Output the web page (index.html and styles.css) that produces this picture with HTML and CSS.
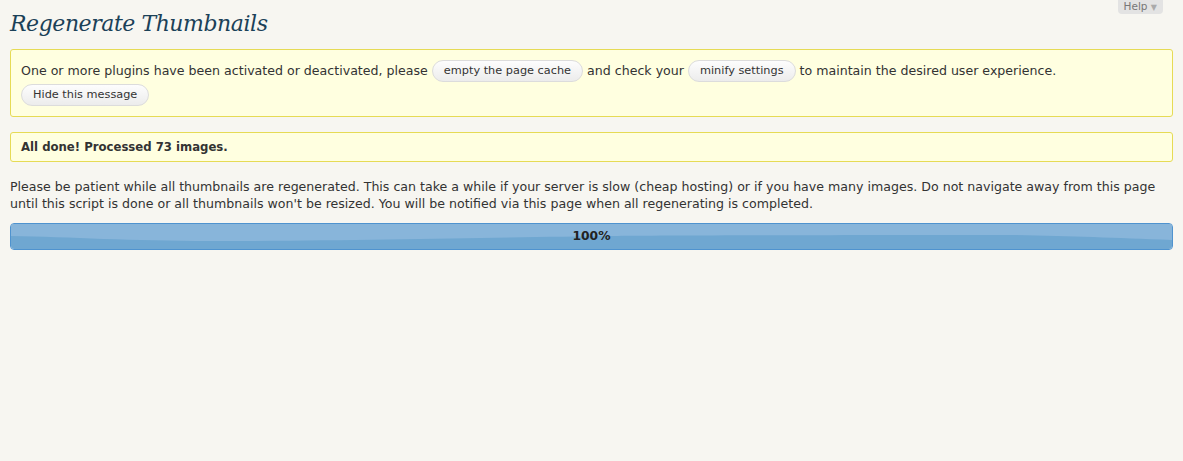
FILE: index.html
```html
<!DOCTYPE html>
<html lang="en">
<head>
<meta charset="utf-8">
<title>Regenerate Thumbnails</title>
<link rel="stylesheet" href="styles.css">
</head>
<body>

<!-- ======= HELP TAB ======= -->
<div class="help-bar">
  <a class="help-tab" href="#">Help <span class="arrow">▼</span></a>
</div>

<div class="wrap">
  <h2 class="page-title">Regenerate Thumbnails</h2>

  <!-- -------- PLUGIN NOTICE -------- -->
  <div class="notice">
    <p>One or more plugins have been activated or deactivated, please
      <a class="pill" href="#">empty the page cache</a> and check your
      <a class="pill" href="#">minify settings</a> to maintain the desired user experience.</p>
    <p><a class="pill" href="#">Hide this message</a></p>
  </div>

  <!-- -------- RESULT -------- -->
  <div class="notice done">
    <p><strong>All done! Processed 73 images.</strong></p>
  </div>

  <p class="intro">Please be patient while all thumbnails are regenerated. This can take a while if your server is slow (cheap hosting) or if you have many images. Do not navigate away from this page until this script is done or all thumbnails won't be resized. You will be notified via this page when all regenerating is completed.</p>

  <div class="progress">
    <div class="progress-fill" style="width:100%">
      <svg class="gloss" viewBox="0 0 1160 25" preserveAspectRatio="none">
        <path d="M0 0H1160V16C1100 14 1060 12 1000 11C800 11 650 11.5 600 12C500 13 350 17 200 17C120 17 60 13 0 12Z" fill="#88b5da"/>
      </svg>
    </div>
    <span class="progress-label">100%</span>
  </div>
</div>

</body>
</html>
```

FILE: styles.css
```css
/* ---------- BASE ---------- */
:root{
  --bg:#f7f6f1;
  --text:#333;
  --title:#1b4158;
  --notice-bg:#ffffe0;
  --notice-border:#e6db55;
}
*{box-sizing:border-box;}
body{margin:0;background:var(--bg);color:var(--text);
  font-family:"DejaVu Sans",Verdana,sans-serif;font-size:12.6px;line-height:17px;}
p{margin:0;}
a{text-decoration:none;}

/* ---------- HELP TAB ---------- */
.help-bar{display:flex;justify-content:flex-end;padding-right:20px;height:0;}
.help-tab{display:block;background:#e3e3e3;color:#777;font-size:10.5px;line-height:12px;
  padding:0 6px 2px 6px;border-radius:0 0 4px 4px;height:14px;}
.help-tab .arrow{color:#aaa;font-size:8px;}

/* ---------- CONTENT ---------- */
.wrap{padding:0 10px;}
.page-title{margin:0;padding:9px 0 0;height:49px;font-family:Georgia,"DejaVu Serif",serif;font-style:italic;
  font-weight:normal;font-size:22px;line-height:29px;color:var(--title);letter-spacing:-.45px;}

.notice{background:var(--notice-bg);border:1px solid var(--notice-border);border-radius:3px;
  padding:10px 10px 10px;}
.notice p{line-height:22px;}
.notice p + p{margin-top:2px;}
.notice.done{margin-top:15px;padding:6px 10px 5px;}
.notice.done p{line-height:17px;font-size:11.7px;}

.pill{display:inline-block;padding:0 11px;line-height:20px;border:1px solid #dcdcdc;border-radius:11px;
  background:linear-gradient(#fdfdfd,#ececec);color:#333;font-size:11.3px;vertical-align:top;}

.intro{margin-top:16px;}

/* ---------- PROGRESS ---------- */
.progress{position:relative;margin-top:11px;height:27px;border:1px solid #4f93cf;border-radius:4px;
  background:#fff;overflow:hidden;}
.progress-fill{height:100%;background:#6fa7d1;position:relative;}
.gloss{position:absolute;inset:0;width:100%;height:100%;display:block;}
.progress-label{position:absolute;inset:0;display:flex;align-items:center;justify-content:center;
  font-weight:bold;color:#222;font-size:12.3px;}
```
